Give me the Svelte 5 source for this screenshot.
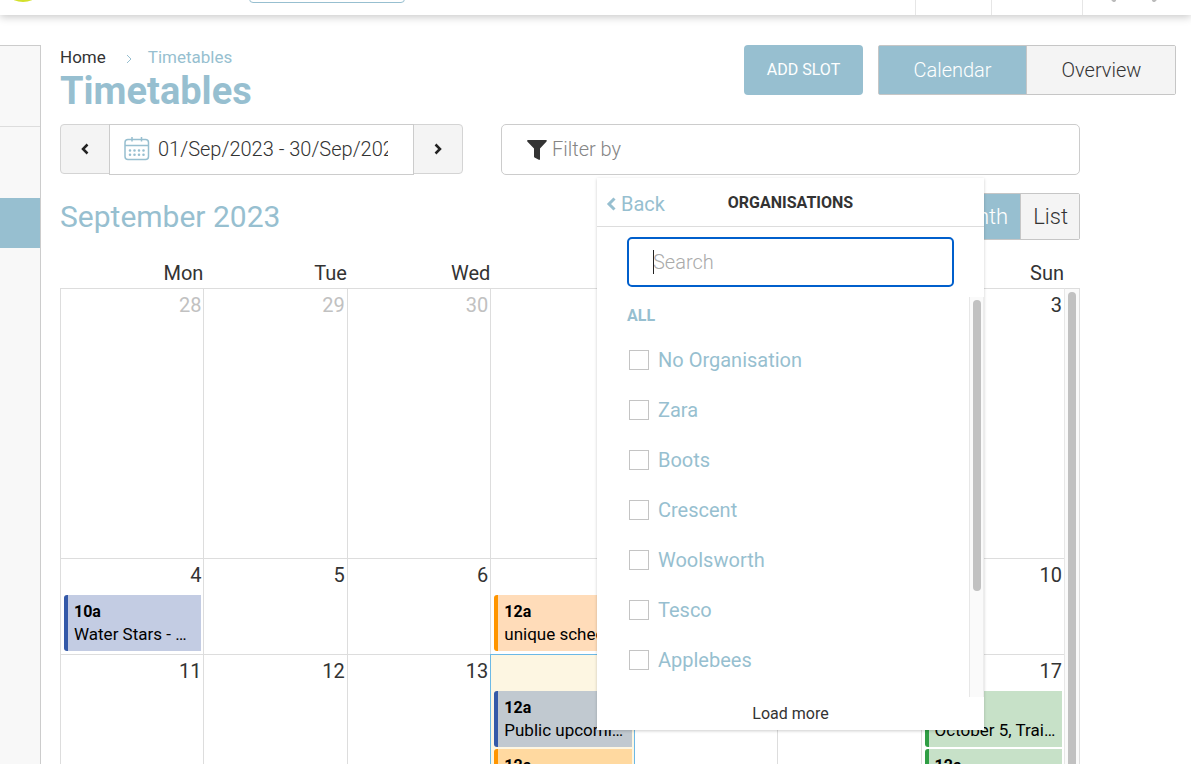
<script lang="ts">
  interface Slot {
    time: string;
    title?: string;
    tone: 'blue' | 'peach' | 'slate' | 'orange' | 'green';
  }

  interface Day {
    date: number;
    muted?: boolean;
    today?: boolean;
    slots?: Slot[];
  }

  const weekdays = ['Mon', 'Tue', 'Wed', 'Thu', 'Fri', 'Sat', 'Sun'];

  const weeks: Day[][] = [
    [
      { date: 28, muted: true },
      { date: 29, muted: true },
      { date: 30, muted: true },
      { date: 31, muted: true },
      { date: 1 },
      { date: 2 },
      { date: 3 }
    ],
    [
      { date: 4, slots: [{ time: '10a', title: 'Water Stars - Weekly', tone: 'blue' }] },
      { date: 5 },
      { date: 6 },
      { date: 7, slots: [{ time: '12a', title: 'unique schedule', tone: 'peach' }] },
      { date: 8 },
      { date: 9 },
      { date: 10 }
    ],
    [
      { date: 11 },
      { date: 12 },
      { date: 13 },
      {
        date: 14,
        today: true,
        slots: [
          { time: '12a', title: 'Public upcoming', tone: 'slate' },
          { time: '12a', tone: 'orange' }
        ]
      },
      { date: 15 },
      { date: 16 },
      {
        date: 17,
        slots: [
          { time: '12a', title: 'October 5, Training', tone: 'green' },
          { time: '12a', tone: 'green' }
        ]
      }
    ]
  ];

  const organisations = ['No Organisation', 'Zara', 'Boots', 'Crescent', 'Woolsworth', 'Tesco', 'Applebees'];

  let range = $state('01/Sep/2023 - 30/Sep/2023');
  let search = $state('');
  let selected: string[] = $state([]);
</script>

<div class="page">
  <header class="topbar">
    <svg class="logo" width="46" height="46" viewBox="0 0 46 46" aria-hidden="true">
      <circle cx="23" cy="23" r="23" fill="#d3e02b" />
    </svg>
    <input class="site-search" type="text" aria-label="Site search" />
    <div class="topbar-cell first"></div>
    <div class="topbar-cell second"></div>
    <div class="topbar-cell third">
      <svg width="50" height="24" viewBox="0 0 50 24" fill="none" stroke="#bbb" stroke-width="4" stroke-linecap="round" aria-hidden="true">
        <path d="M1 18l4 4M49 18l-4 4" />
      </svg>
    </div>
  </header>

  <div class="layout">
    <nav class="sidebar" aria-label="Sections">
      <div class="side-item tall"></div>
      <div class="side-item"></div>
      <div class="side-item active"></div>
    </nav>

    <main>
      <div class="heading">
        <div>
          <nav class="breadcrumb" aria-label="Breadcrumb">
            <a href="#home">Home</a>
            <svg width="6" height="10" viewBox="0 0 6 10" fill="none" stroke="#97bfd0" aria-hidden="true">
              <path d="M1 1l4 4-4 4" />
            </svg>
            <span>Timetables</span>
          </nav>
          <h1>Timetables</h1>
        </div>
        <div class="actions">
          <button class="add">ADD SLOT</button>
          <div class="toggle wide">
            <button class="on">Calendar</button>
            <button>Overview</button>
          </div>
        </div>
      </div>

      <div class="content">
        <div class="filters">
          <div class="range">
            <button aria-label="Previous month">
              <svg width="8" height="12" viewBox="0 0 8 12" fill="none" stroke="#222" stroke-width="2.500" aria-hidden="true">
                <path d="M6.500 1.500L2 6l4.500 4.500" />
              </svg>
            </button>
            <label class="range-field">
              <svg width="26" height="24" viewBox="0 0 26 24" fill="none" stroke="#97bfd0" stroke-width="1.500" aria-hidden="true">
                <rect x="1" y="2.500" width="23.500" height="20" rx="3" />
                <path d="M1 8.500h23.500M8 0v4.500M17.500 0v4.500" />
                <path d="M6 13.500h14M6 17.800h14" stroke-width="2.600" stroke-linecap="round" stroke-dasharray="0 4.500" />
              </svg>
              <input type="text" aria-label="Date range" bind:value={range} />
            </label>
            <button aria-label="Next month">
              <svg width="8" height="12" viewBox="0 0 8 12" fill="none" stroke="#222" stroke-width="2.500" aria-hidden="true">
                <path d="M1.500 1.500L6 6l-4.500 4.500" />
              </svg>
            </button>
          </div>

          <div class="filter">
            <label class="filter-field">
              <svg width="20" height="20" viewBox="0 0 20 20" fill="#333" aria-hidden="true">
                <path d="M1 0h18q1 0 .8 1l-.5.800L13 8.500V19q-.2 1.200-1.200.800L7.500 17.500Q7 17 7 16.500V8.500L.5 1.800Q-.5.200 1 0z" />
              </svg>
              <input type="text" aria-label="Filter by" placeholder="Filter by" />
            </label>

            <section class="dropdown" aria-label="Organisations">
              <div class="dropdown-head">
                <button class="back">
                  <svg width="10" height="14" viewBox="0 0 10 14" fill="none" stroke="#97bfd0" stroke-width="3" aria-hidden="true">
                    <path d="M8.500 1.500L3 7l5.500 5.500" />
                  </svg>
                  Back
                </button>
                <h2>ORGANISATIONS</h2>
              </div>
              <div class="search">
                <input type="text" aria-label="Search organisations" placeholder="Search" bind:value={search} />
              </div>
              <div class="options">
                <div class="options-list">
                  <h3>ALL</h3>
                  {#each organisations as name}
                    <label>
                      <input type="checkbox" value={name} bind:group={selected} />
                      {name}
                    </label>
                  {/each}
                </div>
                <div class="track"><div class="thumb short"></div></div>
              </div>
              <button class="more">Load more</button>
            </section>
          </div>
        </div>

        <div class="month-bar">
          <h2>September 2023</h2>
          <div class="toggle">
            <button class="on">Month</button>
            <button>List</button>
          </div>
        </div>

        <div class="calendar">
          <table>
            <thead>
              <tr>
                {#each weekdays as name}
                  <th scope="col">{name}</th>
                {/each}
              </tr>
            </thead>
            <tbody>
              {#each weeks as week}
                <tr>
                  {#each week as day}
                    <td class:muted={day.muted} class:today={day.today}>
                      <div class="date">{day.date}</div>
                      {#each day.slots ?? [] as slot}
                        <div class="slot {slot.tone}">
                          <strong>{slot.time}</strong>
                          <span>{slot.title ?? ''}</span>
                        </div>
                      {/each}
                    </td>
                  {/each}
                </tr>
              {/each}
            </tbody>
          </table>
          <div class="track"><div class="thumb"></div></div>
        </div>
      </div>
    </main>
  </div>
</div>

<style>
  :global(body) {
    overflow: hidden;
    background: #fff;
  }
  .page {
    height: 100vh;
    overflow: hidden;
    color: #333;
    font-family: Roboto, "Liberation Sans", sans-serif;
    font-size: 20px;
  }
  .page * {
    box-sizing: border-box;
  }
  h1, h2, h3 {
    margin: 0;
  }
  button, input {
    margin: 0;
    color: inherit;
    font-family: inherit;
    font-size: 20px;
    font-weight: 300;
  }
  button {
    cursor: pointer;
  }
  input {
    outline: none;
  }
  svg {
    display: block;
    flex: none;
  }

  .topbar {
    display: flex;
    align-items: flex-start;
    height: 15px;
    background: #fff;
    box-shadow: 0 2px 8px rgba(0, 0, 0, 0.22);
    clip-path: inset(0 0 -12px 0);
  }
  .logo {
    margin-top: -44px;
  }
  .site-search {
    width: 156px;
    height: 40px;
    margin: -37px auto 0 203px;
    border: 1px solid #97bfd0;
    border-radius: 4px;
  }
  .topbar-cell {
    height: 15px;
    border-left: 1px solid #e6e6e6;
  }
  .first {
    width: 76px;
  }
  .second {
    width: 91px;
  }
  .third {
    width: 109px;
    padding-left: 26px;
  }
  .third svg {
    margin-top: -22px;
  }

  .layout {
    display: flex;
    height: calc(100vh - 15px);
    padding-top: 30px;
  }
  .sidebar {
    flex: none;
    width: 41px;
    border-top: 1px solid #ccc;
    border-right: 1px solid #ccc;
    background: #f8f8f8;
  }
  .side-item {
    height: 71px;
  }
  .side-item.tall {
    height: 81px;
    border-bottom: 1px solid #ddd;
  }
  .side-item.active {
    height: 50px;
    background: #97bfd0;
  }
  main {
    flex: 1;
    min-width: 0;
    padding: 0 15px 0 19px;
  }

  .heading {
    display: flex;
    justify-content: space-between;
    align-items: flex-start;
  }
  .breadcrumb {
    display: flex;
    align-items: center;
    height: 24px;
    color: #97bfd0;
    font-size: 17px;
  }
  .breadcrumb a {
    color: #333;
    text-decoration: none;
  }
  .breadcrumb svg {
    margin: 4px 16px 0 20px;
  }
  h1 {
    color: #97bfd0;
    font-size: 38px;
    font-weight: 700;
    line-height: 44px;
  }
  .actions {
    display: flex;
    gap: 15px;
  }
  .add {
    width: 119px;
    height: 50px;
    padding: 0 0 2px;
    border: 0;
    border-radius: 4px;
    background: #97bfd0;
    color: #fff;
    font-size: 16px;
    font-weight: 400;
  }
  .toggle {
    display: flex;
    border: 1px solid #c6c6c6;
    border-radius: 2px;
  }
  .toggle button {
    height: 45px;
    padding: 0 12px;
    border: 0;
    background: #f4f4f4;
    font-size: 22px;
  }
  .toggle button + button {
    padding: 0 11px 0 12px;
    border-left: 1px solid #c6c6c6;
  }
  .toggle .on {
    background: #97bfd0;
    color: #fff;
  }
  .toggle.wide button {
    width: 149px;
    height: 48px;
    font-size: 20px;
  }
  .toggle.wide .on {
    width: 147px;
  }

  .content {
    margin: 11px 96px 0 0;
  }
  .filters {
    display: flex;
    align-items: flex-start;
    gap: 38px;
  }
  .range {
    display: flex;
    width: 403px;
  }
  .range button {
    display: flex;
    align-items: center;
    justify-content: center;
    width: 50px;
    height: 50px;
    padding: 0;
    border: 1px solid #d4d4d4;
    border-radius: 4px 0 0 4px;
    background: #f4f4f4;
  }
  .range button:last-child {
    border-radius: 0 4px 4px 0;
  }
  .range-field {
    position: relative;
    flex: 1;
    margin: 0 -1px;
  }
  .range-field svg {
    position: absolute;
    top: 13px;
    left: 15px;
  }
  .range-field input {
    display: block;
    width: 100%;
    height: 51px;
    padding: 0 25px 2px 48px;
    border: 1px solid #ccc;
  }
  .filter {
    position: relative;
    flex: 1;
  }
  .filter-field {
    display: flex;
    align-items: center;
    gap: 5px;
    height: 51px;
    padding-left: 25px;
    border: 1px solid #ccc;
    border-radius: 5px;
  }
  .filter-field input {
    flex: 1;
    padding: 0 0 2px;
    border: 0;
  }
  .filter-field input::placeholder {
    color: #858585;
  }

  .dropdown {
    position: absolute;
    z-index: 2;
    top: 54px;
    left: 96px;
    width: 387px;
    background: #fff;
    box-shadow: 0 1px 3px rgba(0, 0, 0, 0.2);
  }
  .dropdown-head {
    display: grid;
    grid-template-columns: 1fr auto 1fr;
    align-items: center;
    height: 49px;
    border-bottom: 1px solid #ddd;
  }
  .dropdown-head h2 {
    font-size: 16px;
    font-weight: 700;
  }
  .back {
    display: flex;
    align-items: center;
    gap: 5px;
    padding: 3px 0 0 9px;
    border: 0;
    background: none;
    color: #97bfd0;
    font-weight: 400;
  }
  .search {
    position: relative;
    margin: 10px 30px;
  }
  .search::before {
    content: "";
    position: absolute;
    top: 13px;
    left: 26px;
    width: 1px;
    height: 24px;
    background: #222;
  }
  .search input {
    display: block;
    width: 100%;
    height: 50px;
    padding: 0 24px;
    border: 2px solid #005fcc;
    border-radius: 5px;
  }
  .search input::placeholder {
    color: #aaa;
  }
  .options {
    display: flex;
    height: 400px;
    overflow: hidden;
  }
  .options-list {
    flex: 1;
    padding: 7px 0 0 30px;
    color: #97bfd0;
  }
  .options-list h3 {
    font-size: 16px;
    line-height: 24px;
    margin-bottom: 7px;
  }
  .options-list label {
    display: flex;
    align-items: center;
    gap: 9px;
    height: 50px;
    padding-left: 2px;
  }
  .options-list input {
    appearance: none;
    width: 20px;
    height: 20px;
    border: 1px solid #c4c4c4;
    background: #fff;
  }
  .options-list input:checked {
    background: #97bfd0;
  }
  .track {
    flex: none;
    width: 15px;
    padding: 3px 3px 0;
    border-left: 1px solid #e7e7e7;
    border-right: 1px solid #ededed;
    background: #fafafa;
  }
  .thumb {
    width: 8px;
    height: 100%;
    border-radius: 4px;
    background: #c1c1c1;
  }
  .thumb.short {
    height: 291px;
  }
  .more {
    display: block;
    width: 100%;
    height: 33px;
    padding: 0;
    border: 0;
    background: none;
    font-size: 16px;
    font-weight: 400;
  }

  .month-bar {
    display: flex;
    align-items: center;
    justify-content: space-between;
    margin-top: 18px;
  }
  .month-bar h2 {
    color: #97bfd0;
    font-size: 30px;
    font-weight: 400;
  }

  .calendar {
    display: flex;
    align-items: flex-start;
    margin-top: 18px;
  }
  .calendar table {
    flex: 1;
    width: 100%;
    min-width: 0;
    table-layout: fixed;
    border-spacing: 0;
  }
  .calendar th {
    height: 30px;
    padding: 0;
    font-weight: 400;
    text-align: right;
  }
  .calendar tbody tr {
    height: 96px;
  }
  .calendar tbody tr:first-child {
    height: 270px;
  }
  .calendar tbody tr:last-child {
    height: 270px;
  }
  .calendar td {
    padding: 0 2px 0 3px;
    border-top: 1px solid #ddd;
    border-left: 1px solid #ddd;
    vertical-align: top;
  }
  .calendar .track {
    width: 16px;
    height: 640px;
    margin-top: 30px;
    border-top: 1px solid #ddd;
    border-right-color: #ddd;
  }
  .date {
    height: 36px;
    line-height: 32px;
    text-align: right;
  }
  .muted {
    color: #c1c1c1;
  }
  .calendar td.today {
    position: relative;
    border-color: #6cb9e6;
    background: #fdf6e2;
    box-shadow: 1px 0 0 #6cb9e6;
  }
  .slot {
    height: 56px;
    margin-bottom: 2px;
    padding: 6px;
    border-left: 4px solid #3459a8;
    border-radius: 3px 0 0 3px;
    background: #c3cce3;
    color: #000;
    font-size: 17px;
    line-height: 22px;
  }
  .slot strong, .slot span {
    display: block;
    overflow: hidden;
    text-overflow: ellipsis;
    white-space: nowrap;
  }
  .slot strong {
    font-size: 16px;
  }
  .slot.peach {
    border-color: #ff9500;
    background: #ffdcb9;
  }
  .slot.slate {
    background: #c1c9d0;
  }
  .slot.orange {
    border-color: #ff9500;
    background: #ffd9a0;
  }
  .slot.green {
    border-color: #2f9e44;
    background: #c7e1c8;
  }
</style>
